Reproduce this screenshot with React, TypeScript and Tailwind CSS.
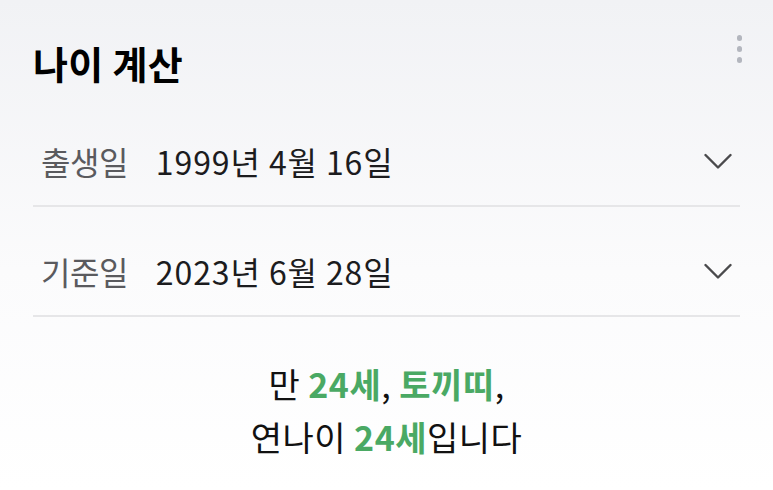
import React from 'react';

const font = { fontFamily: '"Noto Sans CJK KR", "Noto Sans", sans-serif' };

function Chevron() {
  return (
    <svg width="28" height="17" viewBox="0 0 28 17" fill="none" className="text-[#4a4a4c]">
      <path d="M1.5 2 L14 14.5 L26.5 2" stroke="currentColor" strokeWidth="2.4" strokeLinecap="round" strokeLinejoin="round" />
    </svg>
  );
}

function DateRow({ label, value }: { label: string; value: string }) {
  return (
    <div className="flex items-center justify-between border-b-2 border-[#e6e6e8] pt-[46px] pb-[26px] pl-[8px] pr-[8px]">
      <div className="flex items-center gap-[28px] h-[36px]">
        <span className="text-[32px] tracking-[-0.5px] text-[#5a5a5e]">{label}</span>
        <span className="text-[32px] tracking-[0.9px] text-[#1c1c1e]">{value}</span>
      </div>
      <Chevron />
    </div>
  );
}

export default function App() {
  return (
    <div className="w-[773px] h-[490px] overflow-hidden bg-gradient-to-b from-[#f1f2f5] via-[#fbfbfc] via-55% to-white" style={font}>
      <div className="px-[33px]">
        <div className="flex items-start justify-between h-[97px]">
          <h1 className="mt-[38px] text-[38px] leading-[50px] font-bold tracking-[0.3px] text-black">나이 계산</h1>
          <div className="mt-[35px] mr-[-2px] flex flex-col gap-[5.5px]">
            <span className="block w-[5.5px] h-[5.5px] rounded-full bg-[#b3b6be]" />
            <span className="block w-[5.5px] h-[5.5px] rounded-full bg-[#b3b6be]" />
            <span className="block w-[5.5px] h-[5.5px] rounded-full bg-[#b3b6be]" />
          </div>
        </div>
        <DateRow label="출생일" value="1999년 4월 16일" />
        <DateRow label="기준일" value="2023년 6월 28일" />
        <div className="pt-[40px] text-center text-[34px] leading-[53px] tracking-[0.5px] text-[#111]">
          <p>
            만 <span className="font-bold text-[#4aa964]">24세</span>, <span className="font-bold text-[#4aa964]">토끼띠</span>,
          </p>
          <p>
            연나이 <span className="font-bold text-[#4aa964]">24세</span>입니다
          </p>
        </div>
      </div>
    </div>
  );
}
